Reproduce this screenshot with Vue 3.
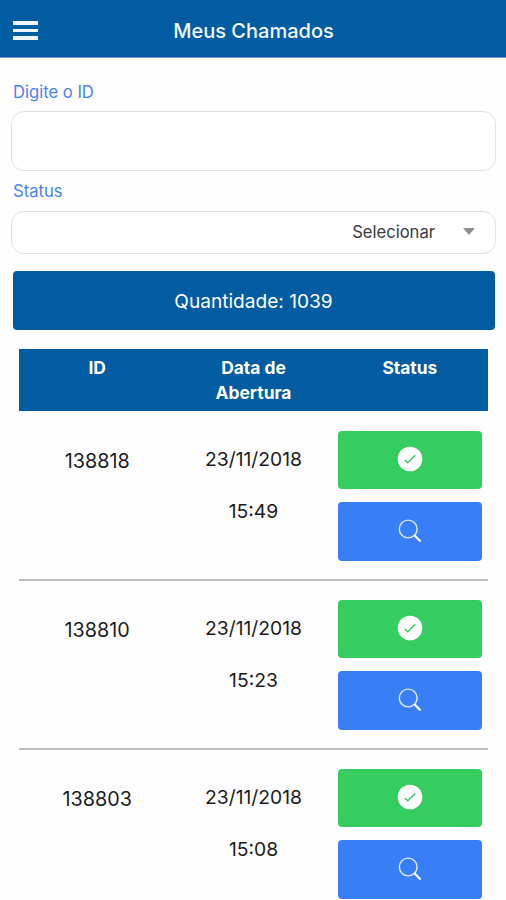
<script setup>
import { ref } from 'vue'

const total = ref(1039)
const searchId = ref('')

const tickets = ref([
  { id: '138818', date: '23/11/2018', time: '15:49' },
  { id: '138810', date: '23/11/2018', time: '15:23' },
  { id: '138803', date: '23/11/2018', time: '15:08' }
])
</script>

<template>
  <div class="page">
    <header class="navbar">
      <button class="menu-btn" aria-label="Menu">
        <span></span>
        <span></span>
        <span></span>
      </button>
      <h1 class="title">Meus Chamados</h1>
    </header>

    <main class="content">
      <label class="label" for="search-id">Digite o ID</label>
      <input id="search-id" v-model="searchId" class="field" type="text" />

      <div class="label label-status">Status</div>
      <div class="select">
        <span class="select-text">Selecionar</span>
        <span class="select-arrow"></span>
      </div>

      <button class="total">Quantidade: {{ total }}</button>

      <div class="table">
        <div class="table-head">
          <div>ID</div>
          <div>Data de<br />Abertura</div>
          <div>Status</div>
        </div>

        <div v-for="t in tickets" :key="t.id" class="row">
          <div class="cell-id">{{ t.id }}</div>
          <div class="cell-date">
            <span>{{ t.date }}</span>
            <span>{{ t.time }}</span>
          </div>
          <div class="cell-actions">
            <button class="btn btn-ok" aria-label="Status">
              <svg width="26" height="26" viewBox="0 0 26 26">
                <circle cx="13" cy="13" r="12.3" fill="#fff" />
                <path d="M7.8 13.9l3 2.8 7.5-7.4" fill="none" stroke="#35cd60" stroke-width="1.4" />
              </svg>
            </button>
            <button class="btn btn-view" aria-label="Detalhes">
              <svg width="24" height="24" viewBox="0 0 24 24" fill="none" stroke="#fff">
                <circle cx="10.2" cy="10" r="8.9" stroke-width="1.4" stroke-opacity="0.85" />
                <path d="M16.4 16.2l6.2 6.4" stroke-width="2.2" />
              </svg>
            </button>
          </div>
        </div>
      </div>
    </main>
  </div>
</template>

<style>
body {
  background: #fefefe;
}
</style>

<style scoped>
.page {
  height: 900px;
  overflow: hidden;
  font-family: Inter, "Liberation Sans", sans-serif;
  color: #1c1c1c;
}

button {
  border: none;
  padding: 0;
  font-family: inherit;
  color: #fff;
}

/* --- topo --- */
.navbar {
  display: grid;
  grid-template-columns: 50px 1fr 50px;
  align-items: center;
  height: 58px;
  padding-top: 4px;
  box-sizing: border-box;
  background: #015ca1;
  border-bottom: 1px solid #8090c8;
}

.menu-btn {
  display: flex;
  flex-direction: column;
  gap: 4px;
  width: 25px;
  margin-left: 12.5px;
  background: none;
}

.menu-btn span {
  height: 3.5px;
  background: #eef4ff;
}

.title {
  margin: 0;
  padding: 1px 0 0 1px;
  text-align: center;
  font-size: 20px;
  font-weight: 500;
  line-height: 24px;
  color: #f2f6ff;
}

/* --- filtros --- */
.content {
  padding: 24px 10px 0 11px;
}

.label {
  display: block;
  margin-left: 2px;
  font-size: 16.6px;
  line-height: 20px;
  color: #4a83ee;
}

.label-status {
  margin-top: 10px;
}

.field,
.select {
  width: 100%;
  box-sizing: border-box;
  border: 1.5px solid #e2e2e2;
  border-radius: 13px;
  background: #fff;
}

.field {
  display: block;
  height: 60px;
  margin-top: 9px;
  padding: 0 12px;
  font-size: 18px;
}

.select {
  display: flex;
  align-items: center;
  justify-content: flex-end;
  height: 43px;
  margin-top: 10px;
  padding: 0 20px 2px 0;
}

.select-text {
  font-size: 16.6px;
  color: #3c3c3c;
}

.select-arrow {
  margin-left: 28px;
  border: 6px solid transparent;
  border-top: 7px solid #8f8f8f;
  border-bottom: none;
}

.total {
  display: block;
  width: 482px;
  height: 59px;
  margin: 17px 0 0 2px;
  padding: 1px 1px 0 0;
  border-radius: 4px;
  background: #015ca1;
  font-size: 19.1px;
}

/* --- tabela --- */
.table {
  margin: 19px 8px 0;
}

.table-head,
.row {
  display: grid;
  grid-template-columns: repeat(3, 1fr);
  text-align: center;
}

.table-head {
  height: 62px;
  padding-top: 6.4px;
  box-sizing: border-box;
  background: #015ca1;
  color: #fff;
  font-size: 17.4px;
  font-weight: 700;
  line-height: 25px;
}

.row {
  height: 169px;
  padding-top: 19px;
  box-sizing: border-box;
  border-bottom: 2px solid #bdbdbd;
  font-size: 19.3px;
  line-height: 24px;
}

.row:nth-child(2) {
  height: 170px;
  padding-top: 20px;
}

.cell-id {
  padding-top: 18px;
  font-size: 19.8px;
}

.cell-date {
  display: flex;
  flex-direction: column;
  gap: 28px;
  padding-top: 16px;
}

.cell-actions {
  display: flex;
  flex-direction: column;
  gap: 13px;
  padding: 0 6px;
}

.btn {
  display: flex;
  align-items: center;
  justify-content: center;
  height: 58.4px;
  padding-bottom: 2px;
  border-radius: 4px;
}

.btn-ok {
  background: #35cd60;
}

.btn-view {
  background: #377ef7;
}

.btn svg {
  display: block;
}
</style>
